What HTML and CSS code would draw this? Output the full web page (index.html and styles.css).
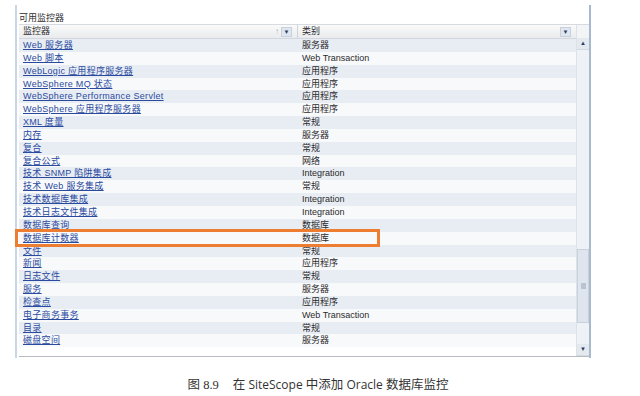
FILE: index.html
```html
<!DOCTYPE html>
<html lang="zh-CN">
<head>
  <meta charset="UTF-8" />
  <title>可用监控器</title>
  <link rel="stylesheet" href="styles.css">
</head>
<body>
  <div class="panel">
    <div class="panel-title">可用监控器</div>
    <div class="grid">
      <div class="grid-main">
        <div class="grid-head">
          <div class="head-cell head-name">
            <span>监控器</span>
            <span class="sort-icons"><span class="sort-up">↑</span><span class="drop-btn">▼</span></span>
          </div>
          <div class="head-cell head-type">
            <span>类别</span>
            <span class="drop-btn">▼</span>
          </div>
        </div>
        <div class="grid-body" id="rows"></div>
      </div>
      <div class="scrollbar">
        <div class="scroll-corner"></div>
        <div class="scroll-btn">▲</div>
        <div class="scroll-track"></div>
        <div class="scroll-thumb"><span class="grip"></span></div>
        <div class="scroll-track short"></div>
        <div class="scroll-btn">▼</div>
      </div>
    </div>
  </div>
  <p class="caption"><span class="fig">图 8.9</span>在 <span class="lat">SiteScope</span> 中添加 <span class="lat">Oracle</span> 数据库监控</p>

  <script>
    const monitors = [
      ['Web 服务器', '服务器'],
      ['Web 脚本', 'Web Transaction'],
      ['WebLogic 应用程序服务器', '应用程序'],
      ['WebSphere MQ 状态', '应用程序'],
      ['WebSphere Performance Servlet', '应用程序'],
      ['WebSphere 应用程序服务器', '应用程序'],
      ['XML 度量', '常规'],
      ['内存', '服务器'],
      ['复合', '常规'],
      ['复合公式', '网络'],
      ['技术 SNMP 陷阱集成', 'Integration'],
      ['技术 Web 服务集成', '常规'],
      ['技术数据库集成', 'Integration'],
      ['技术日志文件集成', 'Integration'],
      ['数据库查询', '数据库'],
      ['数据库计数器', '数据库'],
      ['文件', '常规'],
      ['新闻', '应用程序'],
      ['日志文件', '常规'],
      ['服务', '服务器'],
      ['检查点', '应用程序'],
      ['电子商务事务', 'Web Transaction'],
      ['目录', '常规'],
      ['磁盘空间', '服务器']
    ];

    const rows = document.getElementById('rows');
    monitors.forEach(function(m) {
      const row = document.createElement('div');
      row.className = 'row';
      row.innerHTML = `
        <div class="cell"><a href="#">${m[0]}</a></div>
        <div class="cell type">${m[1]}</div>
      `;
      if (m[0] === '数据库计数器') {
        row.classList.add('marked');
        row.innerHTML += '<span class="mark"></span>';
      }
      rows.appendChild(row);
    });
  </script>
</body>
</html>
```

FILE: styles.css
```css
body {
  margin: 0;
  background-color: #ffffff;
  font-family: 'Liberation Sans', Arial, 'Noto Sans CJK SC', sans-serif;
  font-size: 9px;
  color: #333333;
}

.panel {
  margin: 5px 0 0 15px;
  width: 572px;
  height: 353px;
  border-left: 2px solid #c9d6e6;
  border-right: 2px solid #a9b9cf;
  display: flex;
  flex-direction: column;
}

.panel-title {
  height: 19px;
  padding: 7px 0 0 2px;
  box-sizing: border-box;
  line-height: 12px;
  color: #2e2e2e;
}

.grid {
  flex: 1;
  display: flex;
  margin-left: 2px;
  border-top: 1px solid #d6dbe2;
  border-bottom: 1px solid #b8bcc2;
  margin-bottom: 1px;
}

.grid-main {
  flex: 1;
  display: flex;
  flex-direction: column;
}

.grid-head {
  display: grid;
  grid-template-columns: 279px 1fr;
  height: 13px;
  background: linear-gradient(#fafafa, #e9ebee);
  border-bottom: 1px solid #d2d7de;
}

.head-cell {
  display: flex;
  align-items: center;
  justify-content: space-between;
  padding: 0 5px 0 4px;
  line-height: 13px;
  color: #2e2e2e;
}

.head-name {
  border-right: 1px solid #cfd4db;
}

.sort-icons {
  display: flex;
  align-items: center;
  gap: 2px;
}

.sort-up {
  color: #b5b5b5;
  font-size: 8px;
}

.drop-btn {
  display: inline-block;
  width: 9px;
  height: 8px;
  line-height: 8px;
  text-align: center;
  font-size: 6px;
  color: #2a3d5c;
  background-color: #dfe6f0;
  border: 1px solid #c8d0dc;
}

.row {
  display: grid;
  grid-template-columns: 279px 1fr;
  height: 12.85px;
  line-height: 12.85px;
  background-color: #f8f9fb;
}

.row:nth-child(odd) {
  background-color: #e8edf4;
}

.cell {
  padding-left: 4px;
  white-space: nowrap;
  color: #2b2b2b;
}

.cell a {
  color: #2a4a9e;
  text-decoration: underline;
  letter-spacing: 0.3px;
}

.marked {
  position: relative;
}

.mark {
  position: absolute;
  left: -4px;
  top: -3px;
  width: 359px;
  height: 12px;
  border: 3px solid #ec7d31;
}

.scrollbar {
  width: 12px;
  display: flex;
  flex-direction: column;
  background-color: #eef1f5;
  border-left: 1px solid #dde2e8;
}

.scroll-corner {
  height: 13px;
  background-color: #f3f4f6;
}

.scroll-btn {
  height: 11px;
  line-height: 11px;
  text-align: center;
  font-size: 6px;
  color: #2a3d5c;
  background-color: #e4e9f0;
  border-bottom: 1px solid #d3d9e1;
}

.scroll-track {
  flex: 1;
  background-color: #eef1f5;
}

.scroll-track.short {
  flex: 0 0 21px;
}

.scroll-thumb {
  height: 74px;
  background-color: #dfe5ee;
  border: 1px solid #c9d1dc;
  box-sizing: border-box;
  display: flex;
  align-items: center;
  justify-content: center;
}

.grip {
  width: 5px;
  height: 6px;
  background-color: #b9c3d2;
}

.caption {
  margin: 16px 0 0;
  text-align: center;
  font-family: 'Liberation Serif', 'Noto Sans CJK SC', serif;
  font-size: 12.5px;
  color: #333333;
  padding-right: 4px;
}

.caption .fig {
  margin-right: 14px;
}

.caption .lat {
  font-family: 'Open Sans', 'Liberation Sans', sans-serif;
  font-size: 12px;
}
```
